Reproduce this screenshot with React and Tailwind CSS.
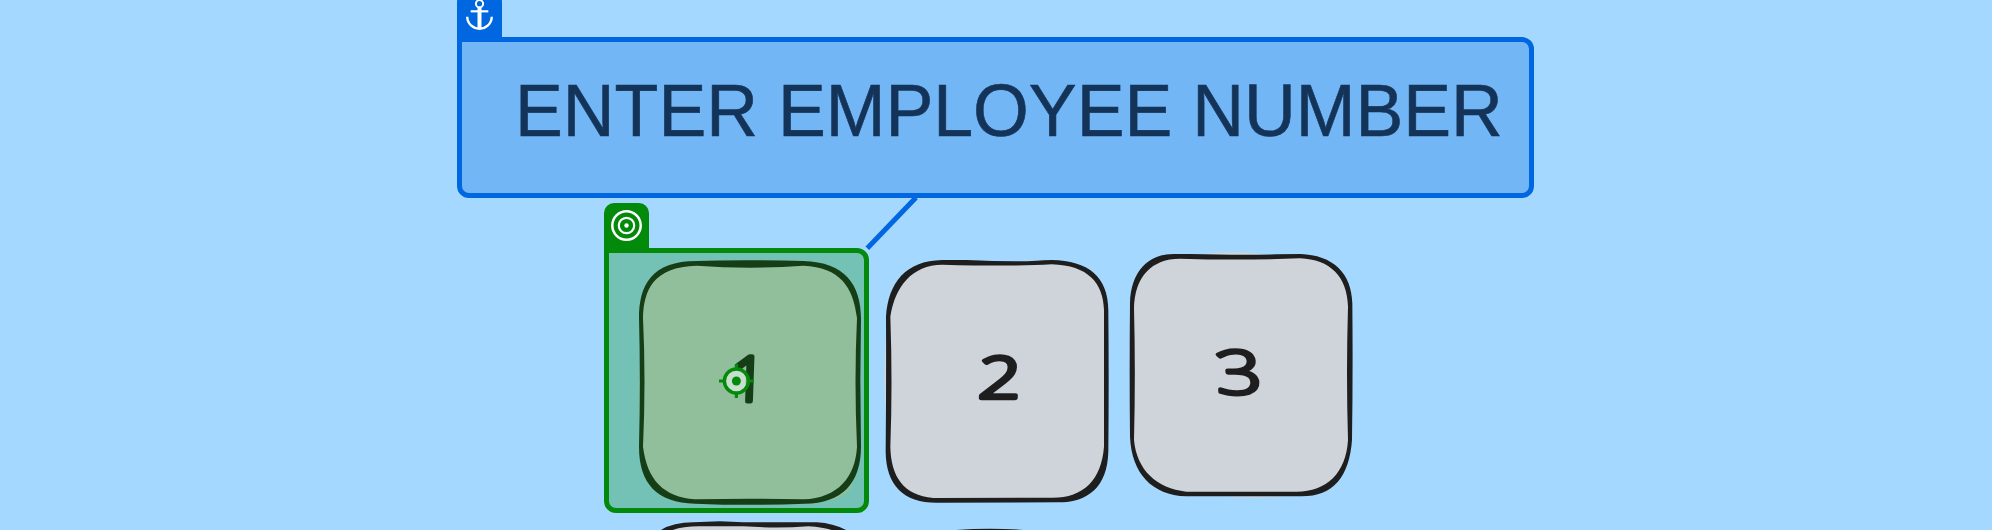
const INK = '#1e1e1e';
const PAPER = '#ced4da';

const keys = [
  {
    digit: '1',
    box: 'pt-[7px]',
    viewBox: '135 204 690 750',
    sliver: 'M152 500 Q141 620 152 720 Z M690 934 Q760 915 785 880 L790 885 Q760 930 690 936 Z M360 941 Q480 950 600 941 Z',
    outer:
      'M147 385 C147 285 185 213 320 213 Q450 208 640 213 C765 216 813 285 813 385 L811 570 L813 770 C813 880 755 940 645 941 Q480 948 315 941 C200 938 147 880 147 770 Q152 570 147 385Z',
    inner:
      'M159 385 C161 300 190 230 320 227 Q480 239 640 227 C750 232 790 290 801 385 Q792 570 801 770 C796 860 745 924 640 928 Q480 924 315 928 C220 920 172 870 159 770 Q168 570 159 385Z',
    text: { size: 186, transform: 'translate(473 632) skewX(-2) scale(.98 1)', stroke: 15 },
  },
  {
    digit: '2',
    box: 'pt-[7px]',
    viewBox: '39 54 690 750',
    sliver: 'M50 260 Q36 400 50 560 Z',
    outer:
      'M48 230 C55 130 105 62 217 60 L290 60 Q430 66 500 62 Q520 60 545 60 C655 62 714 110 715 210 Q717 420 715 635 C712 740 655 787 565 787 L200 788 C100 788 48 735 47 635 Q49 430 48 230Z',
    inner:
      'M61 230 C75 140 125 75 217 74 Q430 80 545 73 C655 76 700 130 702 210 L702 620 C694 720 640 774 545 773 L190 774 C100 765 63 710 61 620 Q68 430 61 230Z',
    text: { size: 172, transform: 'translate(386 475) skewX(-3) scale(1.3 1)', stroke: 13 },
  },
  {
    digit: '3',
    box: '',
    viewBox: '54 33 690 750',
    sliver: 'M260 44 Q370 28 470 44 Z M62 220 Q56 340 62 420 Z M340 768 Q430 777 530 768 Z',
    outer:
      'M60 190 C62 95 115 42 190 42 L240 42 Q390 46 500 43 L570 42 C670 45 725 100 727 190 Q729 400 726 600 C718 710 670 769 575 769 L229 769 C125 765 65 700 60 590 Q58 400 60 190Z',
    inner:
      'M72 205 C74 110 125 56 210 56 Q390 62 570 55 C660 58 712 110 714 200 Q708 400 714 600 C708 700 650 756 557 755 L229 755 C140 745 80 690 72 600 Q77 400 72 205Z',
    text: { size: 182, transform: 'translate(391 463) skewX(5) scale(1.34 1)', stroke: 11 },
  },
];

function Key({ digit, box, viewBox, sliver, outer, inner, text }) {
  return (
    <div className={box}>
      <svg viewBox={viewBox} className="block h-[250px] w-[230px] overflow-visible">
        <path d={sliver} fill={PAPER} />
        <path d={outer} fill={INK} />
        <path d={inner} fill={PAPER} />
        <text
          transform={text.transform}
          textAnchor="middle"
          fontSize={text.size}
          fill={INK}
          stroke={INK}
          strokeWidth={text.stroke}
          strokeLinejoin="round"
          className="font-['Open_Sans',sans-serif] font-light"
        >
          {digit}
        </text>
      </svg>
    </div>
  );
}

function AnchorIcon() {
  return (
    <svg viewBox="0 0 45 50" className="block h-[50px] w-[45px]" fill="none" stroke="#fff">
      <circle cx="22.5" cy="11.7" r="3.6" strokeWidth="2" />
      <path d="M22.5 15.5V36.5" strokeWidth="4" />
      <path d="M13.7 19.3H31.3" strokeWidth="2.2" />
      <path d="M10.2 24.8C10.5 32 16 36.7 22.5 36.7S34.5 32 34.8 24.8" strokeWidth="2.4" />
    </svg>
  );
}

function TargetIcon() {
  return (
    <svg viewBox="0 0 45 45" className="block h-[45px] w-[45px]" fill="none" stroke="#fff">
      <circle cx="22.5" cy="22.5" r="14.2" strokeWidth="2.5" />
      <circle cx="22.5" cy="22.5" r="7.7" strokeWidth="2.2" />
      <circle cx="22.5" cy="22.5" r="2.2" fill="#fff" stroke="none" />
    </svg>
  );
}

function Crosshair() {
  return (
    <svg viewBox="0 0 36 36" className="h-9 w-9" fill="none" stroke="#048a0a">
      <circle cx="17.4" cy="18" r="12" fill="#fff" fillOpacity="0.5" strokeWidth="3.4" />
      <circle cx="17.4" cy="18" r="4.5" fill="#048a0a" stroke="none" />
      <path d="M17.4 1V5.5M17.4 30.5V35M0 18H5M29.9 18H35" strokeWidth="3.2" />
    </svg>
  );
}

export default function App() {
  return (
    <main className="relative flex h-[530px] flex-col overflow-hidden bg-[#a5d8ff] pt-[37px] pr-[458px] pl-[457px]">
      <section className="relative h-[161px] shrink-0">
        <h1 className="scale-y-[1.03] pt-[37px] pl-[58px] font-['Liberation_Sans',Arial,sans-serif] text-[71.7px] leading-[72px] whitespace-nowrap text-[#1e1e1e] [-webkit-text-stroke:0.6px_#1e1e1e]">
          ENTER EMPLOYEE NUMBER
        </h1>
        <div className="absolute inset-0 rounded-xl rounded-tl-none border-5 border-[#0067e0] bg-[#0067e0]/30" />
        <div className="absolute -top-[45px] left-0 h-[50px] w-[45px] rounded-t-[10px] bg-[#0067e0]">
          <AnchorIcon />
        </div>
      </section>

      <div className="flex flex-col gap-[10px] pt-[53px] pl-[178px]">
        <section className="flex items-start">
          <div className="flex gap-[18px] pr-[15px]">
            <Key {...keys[0]} />
            <Key {...keys[1]} />
          </div>
          <Key {...keys[2]} />
        </section>
        <svg viewBox="15 54 1350 36" className="block h-3 w-[450px]">
          <path d="M93 90Q130 67 190 67L270 64L340 67L560 67Q610 70 648 90Z" fill={INK} />
          <path d="M128 90Q160 79 206 79L340 79Q440 86 535 79Q580 82 605 90Z" fill={PAPER} />
          <path d="M978 90Q1080 82 1180 90Z" fill={INK} />
        </svg>
      </div>

      <svg viewBox="860 190 64 64" className="absolute top-[190px] left-[860px] h-16 w-16">
        <path d="M867.3 248.3L916 197.5" stroke="#0067e0" strokeWidth="5" />
      </svg>

      <div className="absolute top-[248px] left-[604px] flex h-[265px] w-[265px] items-center justify-center rounded-xl rounded-tl-none border-5 border-[#048a0a] bg-[#048a0a]/30">
        <div className="absolute -top-[50px] -left-[5px] h-[50px] w-[45px] rounded-t-[10px] bg-[#048a0a]">
          <TargetIcon />
        </div>
        <Crosshair />
      </div>
    </main>
  );
}
